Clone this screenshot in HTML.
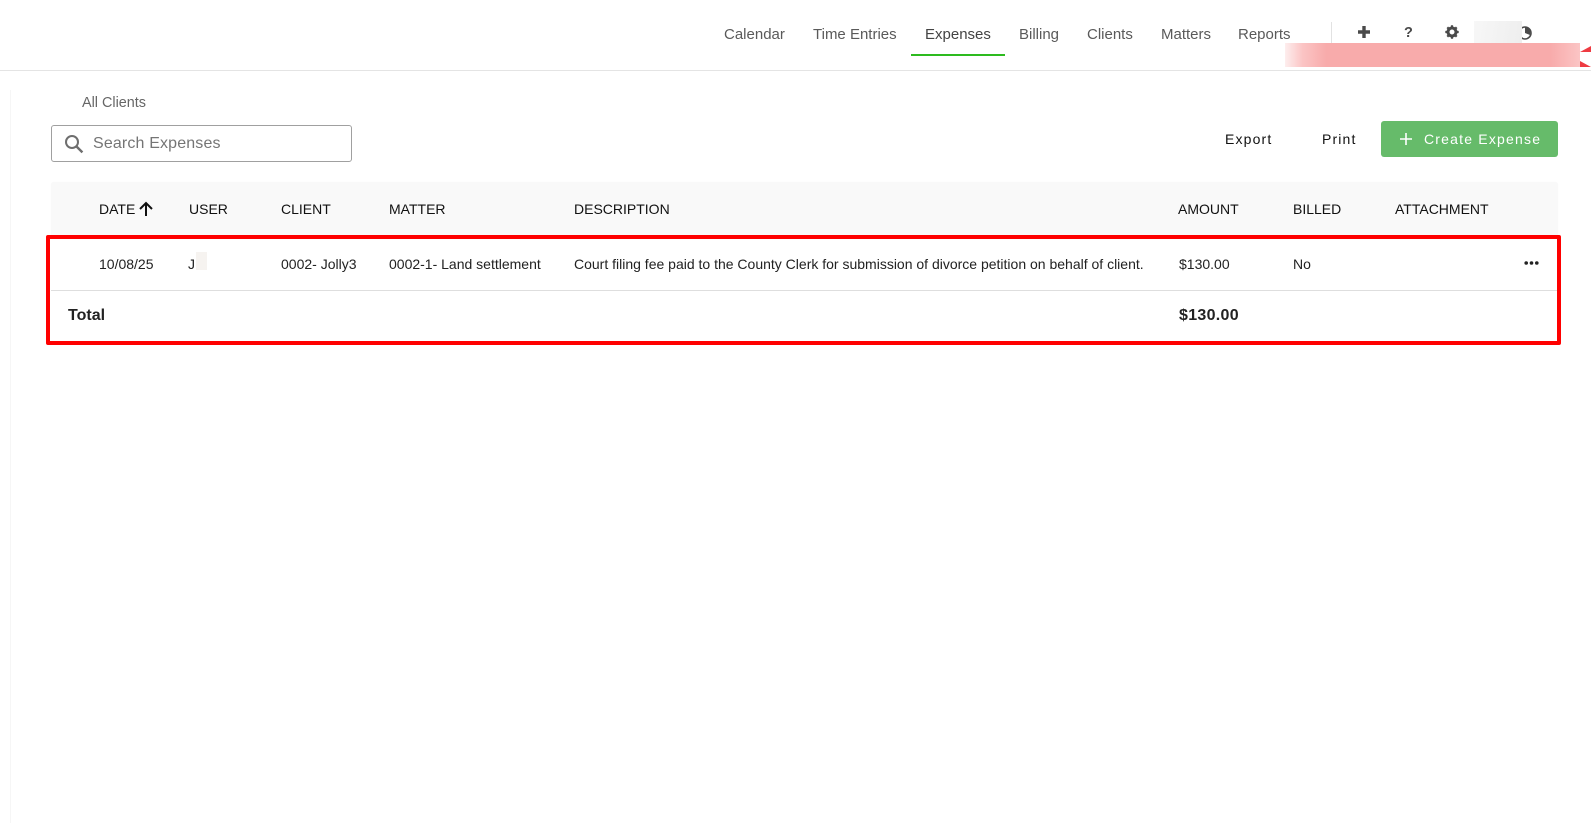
<!DOCTYPE html>
<html>
<head>
<meta charset="utf-8">
<style>
html,body{margin:0;padding:0;width:1591px;height:823px;overflow:hidden;background:#fff;font-family:"Liberation Sans",Arial,sans-serif;}
.t{position:absolute;white-space:nowrap;line-height:20px;}
.nav{font-size:15px;color:#5a5a5a;top:25px;}
.th{font-size:14px;color:#111;top:199px;}
.td{font-size:14px;color:#222;top:254px;}
.b{position:absolute;}
</style>
</head>
<body>
<div class="b" style="left:0;top:70px;width:1591px;height:1px;background:#e4e4e4"></div>
<div class="b" style="left:10px;top:90px;width:1px;height:733px;background:#f6f6f6"></div>

<div class="t nav" style="left:724px">Calendar</div>
<div class="t nav" style="left:813px">Time Entries</div>
<div class="t nav" style="left:925px;color:#444">Expenses</div>
<div class="t nav" style="left:1019px">Billing</div>
<div class="t nav" style="left:1087px">Clients</div>
<div class="t nav" style="left:1161px">Matters</div>
<div class="t nav" style="left:1238px">Reports</div>
<div class="b" style="left:911px;top:54px;width:94px;height:2px;background:#2dbb1f"></div>
<div class="b" style="left:1331px;top:22px;width:1px;height:22px;background:#e2e2e2"></div>

<svg class="b" style="left:1356px;top:24px" width="16" height="16" viewBox="0 0 16 16"><path d="M8 2v12M2 8h12" stroke="#4a4a4a" stroke-width="3.4" fill="none"/></svg>
<div class="t" style="left:1404px;top:23px;font-size:14.5px;font-weight:bold;color:#4a4a4a">?</div>
<svg class="b" style="left:1445px;top:25px" width="14" height="14" viewBox="0 0 14 14"><circle cx="7" cy="7" r="4" fill="none" stroke="#4a4a4a" stroke-width="3"/><path d="M7 0.3v2.6M7 11.1v2.6M0.3 7h2.6M11.1 7h2.6M2.3 2.3l1.8 1.8M9.9 9.9l1.8 1.8M2.3 11.7l1.8-1.8M9.9 4.1l1.8-1.8" stroke="#4a4a4a" stroke-width="2.2"/></svg>
<svg class="b" style="left:1518px;top:25px" width="16" height="18" viewBox="0 0 16 18"><circle cx="7" cy="8" r="6" fill="none" stroke="#4a4a4a" stroke-width="1.6"/><path d="M7 2a6 6 0 0 1 5 8l-5-2z" fill="#4a4a4a"/></svg>
<div class="b" style="left:1474px;top:21px;width:48px;height:22px;background:linear-gradient(100deg,#f7f7f7,#eeeeee)"></div>

<div class="b" style="left:1580px;top:46px;width:11px;height:6px;background:#ee3b42;clip-path:polygon(0 100%,100% 0,100% 100%,0 100%)"></div>
<div class="b" style="left:1580px;top:61px;width:11px;height:6px;background:#ee3b42;clip-path:polygon(0 0,100% 100%,0 100%)"></div>
<div class="b" style="left:1285px;top:43px;width:295px;height:24px;background:linear-gradient(90deg,#fdeeee 0,#fbc4c4 6%,#f8abab 14%,#f8abab 90%,#fbc5c5 100%)"></div>

<div class="t" style="left:82px;top:93px;font-size:14.4px;color:#666">All Clients</div>
<div class="b" style="left:51px;top:125px;width:299px;height:35px;border:1px solid #a0a0a0;border-radius:3px"></div>
<svg class="b" style="left:64px;top:134px" width="20" height="20" viewBox="0 0 20 20"><circle cx="8" cy="8" r="6" fill="none" stroke="#6e6e6e" stroke-width="2"/><path d="M12.4 12.4l6 6" stroke="#6e6e6e" stroke-width="2.4"/></svg>
<div class="t" style="left:93px;top:134px;font-size:16px;color:#757575;letter-spacing:.15px">Search Expenses</div>

<div class="t" style="left:1225px;top:129px;font-size:14px;color:#111;letter-spacing:1.15px">Export</div>
<div class="t" style="left:1322px;top:129px;font-size:14px;color:#111;letter-spacing:1.15px">Print</div>
<div class="b" style="left:1381px;top:121px;width:177px;height:36px;background:#66bb6a;border-radius:3px"></div>
<svg class="b" style="left:1400px;top:133px" width="12" height="12" viewBox="0 0 12 12"><path d="M6 0v12M0 6h12" stroke="#fff" stroke-width="1.6"/></svg>
<div class="t" style="left:1424px;top:129px;font-size:14px;color:#fff;letter-spacing:1.2px">Create Expense</div>

<div class="b" style="left:51px;top:182px;width:1507px;height:53px;background:#f9f9f9;border-radius:3px 3px 0 0;box-shadow:0 0 1px rgba(0,0,0,.05)"></div>
<div class="t th" style="left:99px">DATE</div>
<svg class="b" style="left:138px;top:201px" width="16" height="16" viewBox="0 0 16 16"><path d="M8 15V2M2 8L8 2l6 6" stroke="#111" stroke-width="2" fill="none"/></svg>
<div class="t th" style="left:189px">USER</div>
<div class="t th" style="left:281px">CLIENT</div>
<div class="t th" style="left:389px">MATTER</div>
<div class="t th" style="left:574px">DESCRIPTION</div>
<div class="t th" style="left:1178px">AMOUNT</div>
<div class="t th" style="left:1293px">BILLED</div>
<div class="t th" style="left:1395px">ATTACHMENT</div>

<div class="t td" style="left:99px">10/08/25</div>
<div class="t td" style="left:188px">J</div>
<div class="b" style="left:196px;top:252px;width:11px;height:18px;background:#f6f3f0"></div>
<div class="t td" style="left:281px">0002- Jolly3</div>
<div class="t td" style="left:389px">0002-1- Land settlement</div>
<div class="t td" style="left:574px">Court filing fee paid to the County Clerk for submission of divorce petition on behalf of client.</div>
<div class="t td" style="left:1179px">$130.00</div>
<div class="t td" style="left:1293px">No</div>
<svg class="b" style="left:1524px;top:260px" width="15" height="6" viewBox="0 0 15 6"><circle cx="2.2" cy="3" r="1.8" fill="#222"/><circle cx="7.5" cy="3" r="1.8" fill="#222"/><circle cx="12.8" cy="3" r="1.8" fill="#222"/></svg>

<div class="b" style="left:51px;top:290px;width:1507px;height:1px;background:#dedede"></div>
<div class="t" style="left:68px;top:306px;font-size:16px;font-weight:bold;color:#222">Total</div>
<div class="t" style="left:1179px;top:306px;font-size:16px;font-weight:bold;color:#222;letter-spacing:.3px">$130.00</div>

<div class="b" style="left:46px;top:235px;width:1507px;height:102px;border:4px solid #ff0000;border-radius:2px"></div>
</body>
</html>
